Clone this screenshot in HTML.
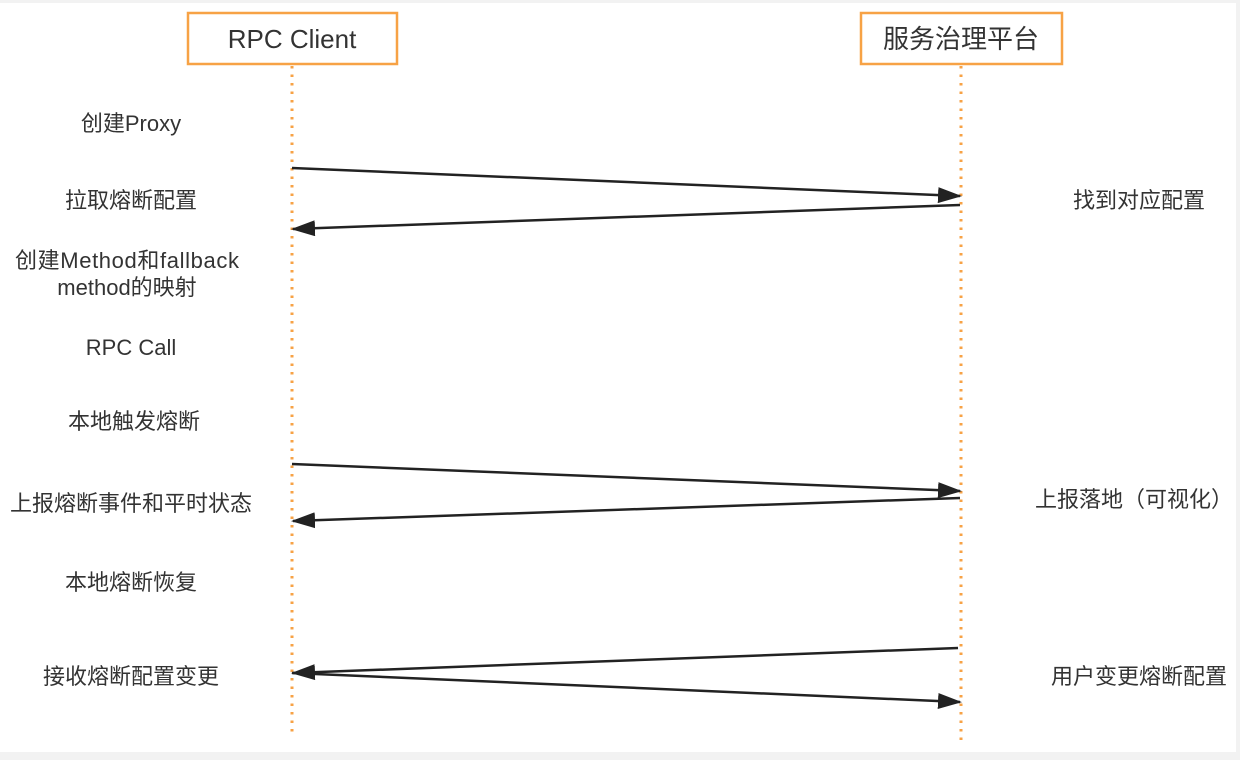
<!DOCTYPE html>
<html><head><meta charset="utf-8"><style>
html,body{margin:0;padding:0;background:#f2f2f2;}
svg{display:block}
text{font-family:"Liberation Sans","Noto Sans CJK SC",sans-serif;fill:#333;font-size:22px;text-anchor:middle}
</style></head><body>
<svg width="1240" height="760" viewBox="0 0 1240 760">
<defs><marker id="a" markerWidth="24" markerHeight="16" refX="22" refY="8" orient="auto" markerUnits="userSpaceOnUse"><path d="M0,0 L24,8 L0,16 Z" fill="#222"/></marker></defs>
<rect x="0" y="3" width="1236" height="749" fill="#fff"/>
<rect x="188" y="13" width="209" height="51" fill="#fff" stroke="#f7a245" stroke-width="2.5"/>
<rect x="861" y="13" width="201" height="51" fill="#fff" stroke="#f7a245" stroke-width="2.5"/>
<text x="292" y="48" style="font-size:26px">RPC Client</text>
<text x="961" y="48" style="font-size:26px">服务治理平台</text>
<line x1="292" y1="66" x2="292" y2="732" stroke="#f7a245" stroke-width="3" stroke-dasharray="2.5,6"/>
<line x1="961" y1="66" x2="961" y2="742" stroke="#f7a245" stroke-width="3" stroke-dasharray="2.5,6"/>
<g stroke="#222" stroke-width="2.5" fill="none">
<line x1="292" y1="168" x2="960" y2="196" marker-end="url(#a)"/>
<line x1="960" y1="205" x2="293" y2="229" marker-end="url(#a)"/>
<line x1="292" y1="464" x2="960" y2="491" marker-end="url(#a)"/>
<line x1="960" y1="498" x2="293" y2="521" marker-end="url(#a)"/>
<line x1="958" y1="648" x2="293" y2="673" marker-end="url(#a)"/>
<line x1="292" y1="673" x2="960" y2="702" marker-end="url(#a)"/>
</g>
<text x="131" y="131">创建Proxy</text>
<text x="131" y="208">拉取熔断配置</text>
<text x="127" y="268" textLength="224">创建Method和fallback</text>
<text x="127" y="295">method的映射</text>
<text x="131" y="355">RPC Call</text>
<text x="134" y="429">本地触发熔断</text>
<text x="131" y="511">上报熔断事件和平时状态</text>
<text x="131" y="590">本地熔断恢复</text>
<text x="131" y="684">接收熔断配置变更</text>
<text x="1139" y="208">找到对应配置</text>
<text x="1134" y="507">上报落地（可视化）</text>
<text x="1139" y="684">用户变更熔断配置</text>
</svg>
</body></html>
